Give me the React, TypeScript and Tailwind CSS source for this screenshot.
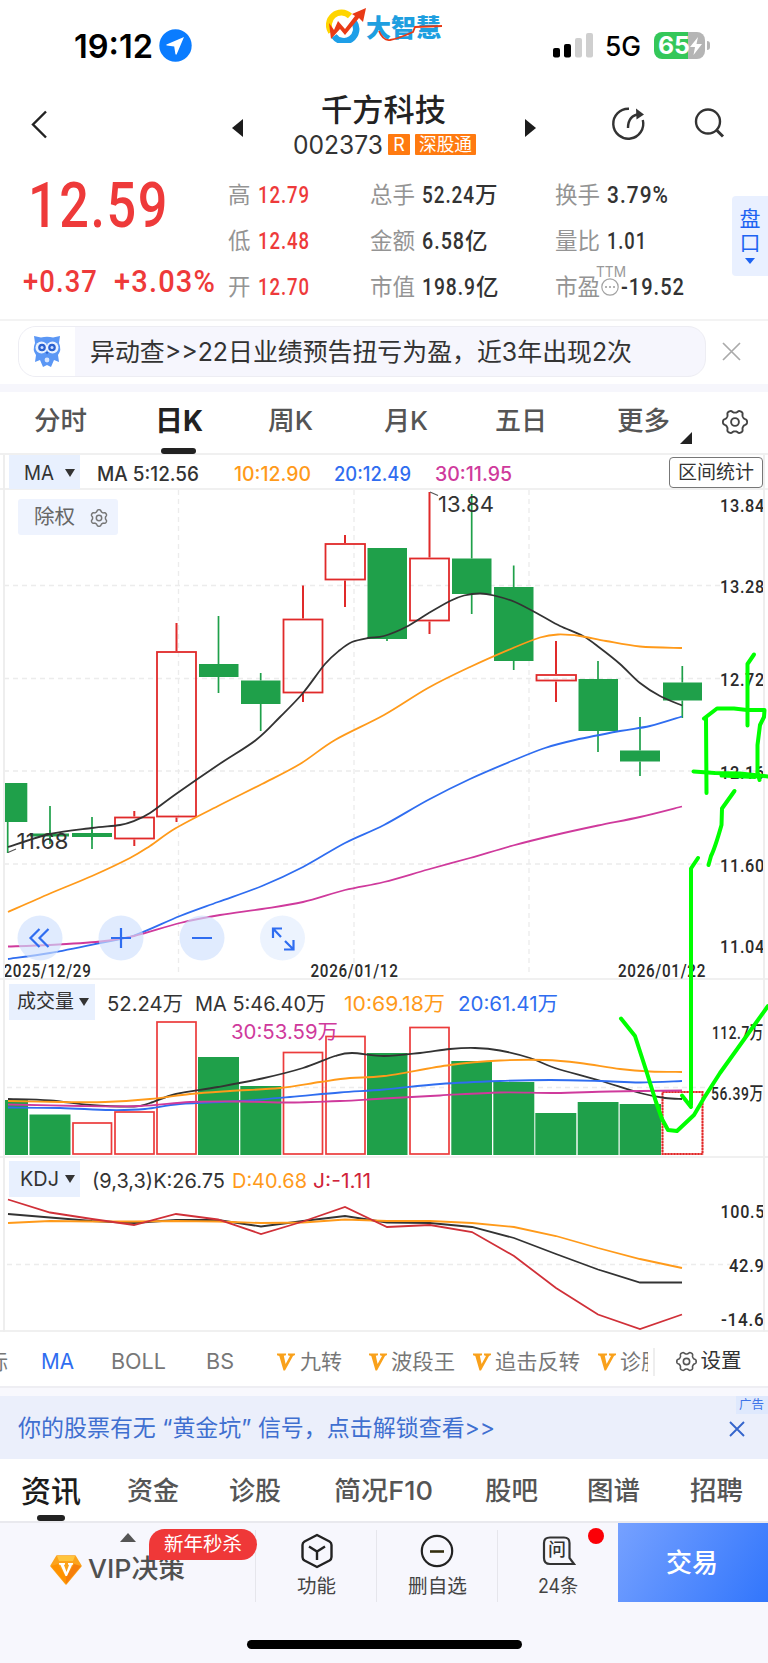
import { useLayoutEffect, useRef } from "react";
import type { ReactNode } from "react";

/** Text squeezed or stretched horizontally to an exact width. */
function Fit({ w, className = "", children }: { w: number; className?: string; children: ReactNode }) {
  const ref = useRef<HTMLSpanElement>(null);
  useLayoutEffect(() => {
    const el = ref.current;
    if (!el) return;
    el.style.transform = "none";
    const natural = el.getBoundingClientRect().width;
    el.style.transform = `scaleX(${w / natural})`;
  }, [w, children]);
  return (
    <span className={`block shrink-0 whitespace-nowrap leading-none ${className}`} style={{ width: w }}>
      <span ref={ref} className="inline-block origin-left leading-none">
        {children}
      </span>
    </span>
  );
}

const DIN = "font-['Roboto','Noto_Sans_CJK_SC',sans-serif]";
const ORANGE = "#ff9a1a";
const BLUE = "#2f6df0";
const PINK = "#cf3a9c";
const RED = "#e02a2a";
const GREEN = "#1fa04a";
const INK = "#333333";

type Pt = [number, number];

function smooth(p: Pt[]) {
  let d = `M${p[0][0]},${p[0][1]}`;
  for (let i = 0; i < p.length - 1; i++) {
    const a = p[Math.max(0, i - 1)];
    const b = p[i];
    const c = p[i + 1];
    const e = p[Math.min(p.length - 1, i + 2)];
    const k = 6;
    d += `C${b[0] + (c[0] - a[0]) / k},${b[1] + (c[1] - a[1]) / k} ${c[0] - (e[0] - b[0]) / k},${c[1] - (e[1] - b[1]) / k} ${c[0]},${c[1]}`;
  }
  return d;
}

const straight = (p: Pt[]) => "M" + p.map((q) => q.join(",")).join("L");

/** Six-toothed gear outline with a ring in the middle; `turn` rotates the teeth. */
function Gear({ size, color, turn = 0, className = "", stroke = 1.9 }: { size: number; color: string; turn?: number; className?: string; stroke?: number }) {
  const R = size / 2 - stroke / 2;
  const pts: string[] = [];
  for (let i = 0; i < 120; i++) {
    const t = (i / 120) * Math.PI * 2;
    const c = Math.tanh(1.6 * Math.cos(6 * t)) / Math.tanh(1.6);
    const r = R * (0.89 + 0.11 * c);
    const a = t + (turn * Math.PI) / 180;
    pts.push(`${(size / 2 + r * Math.cos(a)).toFixed(2)},${(size / 2 + r * Math.sin(a)).toFixed(2)}`);
  }
  return (
    <svg className={`shrink-0 ${className}`} width={size} height={size} viewBox={`0 0 ${size} ${size}`}>
      <polygon points={pts.join(" ")} fill="none" stroke={color} strokeWidth={stroke} strokeLinejoin="round" />
      <circle cx={size / 2} cy={size / 2} r={size * 0.15} fill="none" stroke={color} strokeWidth={stroke} />
    </svg>
  );
}

function StatusBar() {
  return (
    <div className="flex h-[70px]">
      <div className="flex w-[326px] items-start pl-[74px] pt-[29px]">
        <Fit w={79} className="pt-[1px] text-[33px] font-semibold text-black">19:12</Fit>
        <svg className="ml-[6px]" width="33" height="33" viewBox="0 0 33 33">
          <circle cx="16.5" cy="16.5" r="16.2" fill="#0a7cff" />
          <path d="M25 8 L7.5 15.6 Q6.8 16.3 7.8 16.6 L15.2 17.6 L16.4 25 Q17 26.2 17.7 25.2 Z" fill="#fff" />
        </svg>
      </div>
      <div className="flex items-start pt-[7px]">
        <svg width="40" height="36" viewBox="0 0 40 36">
          <path d="M5 25 A12.5 12.5 0 0 1 24 9" fill="none" stroke="#ffd500" strokeWidth="6" />
          <path d="M8 29 A11.5 11.5 0 0 0 28 15" fill="none" stroke="#1e9fe8" strokeWidth="6.5" />
          <path d="M3 16 L5 32 L14 22 L19 28 L33 11 L37 15 L40 1 L26 7 L29 9 L19 22 L12 14 L8 23 Z" fill="#e93a16" />
        </svg>
        <div className="relative mt-[9px]">
          <Fit w={75} className="text-[25px] font-black text-[#1e9fe0]">大智慧</Fit>
          <svg className="absolute left-0 top-0" width="76" height="28" viewBox="0 0 76 28">
            <path d="M13 15 Q17 25 24 24 C34 22 40 19 47 16 L49 11 L76 10" fill="none" stroke="#e93a16" strokeWidth="1.8" />
          </svg>
        </div>
      </div>
      <svg className="ml-[112px] mt-[32px]" width="41" height="26" viewBox="0 0 41 26">
        <rect x="0" y="16" width="7" height="9.500" rx="2" fill="#000" />
        <rect x="11" y="12" width="7" height="13.500" rx="2" fill="#000" />
        <rect x="22" y="6" width="7" height="19.500" rx="2" fill="#cfcfcf" />
        <rect x="33" y="1" width="7" height="24.500" rx="2" fill="#cfcfcf" />
      </svg>
      <Fit w={36} className="ml-[11px] mt-[33px] text-[27px] font-medium text-black">5G</Fit>
      <div className="ml-[13px] mt-[32px] flex items-center self-start">
        <div className="flex h-[27px] w-[51px] items-center overflow-hidden rounded-[8px] bg-[linear-gradient(90deg,#34c759_0_34px,#b5b5b5_34px)] pl-[4px]">
          <Fit w={32} className="text-[24px] font-bold text-white">65</Fit>
          <svg width="12" height="20" viewBox="0 0 12 20">
            <path d="M8 1 L0 11 L5 11 L3.500 19 L12 8 L6.500 8 Z" fill="#fff" />
          </svg>
        </div>
        <div className="ml-[2px] h-[9px] w-[3px] rounded-r-full bg-[#b5b5b5]" />
      </div>
    </div>
  );
}

function TitleBar() {
  return (
    <div className="flex h-[95px]">
      <svg className="ml-[30px] mt-[39px]" width="20" height="32" viewBox="0 0 20 32">
        <path d="M16 2.500 L3 15.500 L16 28.500" fill="none" stroke="#222" strokeWidth="2.400" />
      </svg>
      <svg className="ml-[182px] mt-[49px]" width="11" height="18" viewBox="0 0 11 18">
        <path d="M11 0 V18 L0 9 Z" fill="#1c1c1c" />
      </svg>
      <div className="ml-[50px] mt-[24px] w-[184px]">
        <Fit w={125} className="ml-[28px] text-[31px] font-medium text-[#222]">千方科技</Fit>
        <div className="mt-[7px] flex items-center">
          <Fit w={90} className="text-[25.500px] text-[#333]">002373</Fit>
          <span className="ml-[5px] flex h-[21px] w-[22px] items-center justify-center rounded-[1px] bg-[#ff7a10] text-[18px] leading-none text-white">
            R
          </span>
          <span className="ml-[5px] flex h-[21px] w-[61px] items-center justify-center rounded-[1px] bg-[#ff7a10] leading-none text-white">
            <Fit w={53} className="text-[18px]">深股通</Fit>
          </span>
        </div>
      </div>
      <svg className="ml-[48px] mt-[49px]" width="11" height="18" viewBox="0 0 11 18">
        <path d="M0 0 V18 L11 9 Z" fill="#1c1c1c" />
      </svg>
      <svg className="ml-[75px] mt-[36px]" width="36" height="36" viewBox="0 0 36 36">
        <path d="M18 2.700 A15 15 0 1 0 31.800 14" fill="none" stroke="#333" strokeWidth="2.400" />
        <path d="M17 22 C17 14 20 9 29 8" fill="none" stroke="#333" strokeWidth="2.400" />
        <path d="M25 2.500 L33 8.500 L25.500 13.500 Z" fill="#333" />
      </svg>
      <svg className="ml-[47px] mt-[37px]" width="32" height="32" viewBox="0 0 32 32">
        <circle cx="14" cy="14.500" r="12" fill="none" stroke="#333" strokeWidth="2.400" />
        <path d="M22.500 23 L29 29.500" stroke="#333" strokeWidth="3" />
      </svg>
    </div>
  );
}

function Stat({ label, value, w, unit, red }: { label: string; value: string; w: number; unit?: string; red?: boolean }) {
  return (
    <div className="flex h-[46px] items-center">
      <Fit w={label.length * 22.5} className="text-[22.500px] text-[#949494]">{label}</Fit>
      <Fit w={w} className={`ml-[7px] text-[23px] font-medium tracking-[0.05em] ${DIN} ${red ? "text-[#ee3a3a]" : "text-[#333]"}`}>{value}</Fit>
      {unit && <span className="text-[22.500px] font-medium leading-none text-[#333]">{unit}</span>}
    </div>
  );
}

function Quote() {
  return (
    <div className="flex h-[156px] border-b-2 border-[#f3f3f3]">
      <div className={`w-[228px] text-[#ee3a3a] ${DIN}`}>
        <Fit w={141} className="ml-[28px] mt-[9px] text-[63px] font-medium tracking-[0.03em]">12.59</Fit>
        <div className="mt-[29px] flex pl-[23px]">
          <Fit w={75} className="text-[31px] font-medium tracking-[0.04em]">+0.37</Fit>
          <Fit w={102} className="ml-[16px] text-[31px] font-medium tracking-[0.04em]">+3.03%</Fit>
        </div>
      </div>
      <div className="w-[142px] pt-[7px]">
        <Stat label="高" value="12.79" w={52} red />
        <Stat label="低" value="12.48" w={52} red />
        <Stat label="开" value="12.70" w={52} red />
      </div>
      <div className="w-[185px] pt-[7px]">
        <Stat label="总手" value="52.24" w={53} unit="万" />
        <Stat label="金额" value="6.58" w={43} unit="亿" />
        <Stat label="市值" value="198.9" w={54} unit="亿" />
      </div>
      <div className="w-[177px] pt-[7px]">
        <Stat label="换手" value="3.79%" w={62} />
        <Stat label="量比" value="1.01" w={40} />
        <div className="relative flex h-[46px] items-center">
          <Fit w={45} className="text-[22.500px] text-[#949494]">市盈</Fit>
          <svg className="ml-[1px]" width="18" height="18" viewBox="0 0 18 18">
            <circle cx="9" cy="9" r="8.200" fill="none" stroke="#a3a3a3" strokeWidth="1.200" />
            <circle cx="5" cy="9" r="1" fill="#999" />
            <circle cx="9" cy="9" r="1" fill="#999" />
            <circle cx="13" cy="9" r="1" fill="#999" />
          </svg>
          <Fit w={64} className={`ml-[2px] text-[23px] font-medium tracking-[0.05em] text-[#333] ${DIN}`}>-19.52</Fit>
          <Fit w={30} className="absolute left-[41px] top-[1px] text-[14px] text-[#999]">TTM</Fit>
        </div>
      </div>
      <div className="mt-[31px] flex h-[80px] w-[36px] flex-col items-center rounded-l-[4px] bg-[#e9f0ff] pt-[11px] text-[21px] leading-[24px] text-[#1d63f2]">
        <span>盘</span>
        <span>口</span>
        <svg className="mt-[3px]" width="10" height="6" viewBox="0 0 10 6">
          <path d="M0 0 H10 L5 6 Z" fill="#1d63f2" />
        </svg>
      </div>
    </div>
  );
}

function Notice() {
  return (
    <div className="flex h-[63px] items-start pl-[18px] pt-[5px]">
      <div className="flex h-[51px] w-[688px] items-center overflow-hidden rounded-[18px] border-[1.5px] border-[#ededf3] bg-[#f6f6fd]">
        <div className="flex h-full w-[56px] items-center justify-center bg-white">
          <svg width="32" height="35" viewBox="0 0 32 35">
            <path d="M3 2 L10 3.500 Q16 2 22 3.500 L29 2 L28 9 Q31 16 27 21 L28 28 L23 26 L20 33 L16 31 L12 33 L9 26 L4 28 L5 21 Q1 16 4 9 Z" fill="#5b97f5" />
            <circle cx="10.500" cy="13.500" r="6" fill="#e9f2ff" />
            <circle cx="21.500" cy="13.500" r="6" fill="#e9f2ff" />
            <circle cx="11" cy="13.500" r="3.800" fill="#2c62cf" />
            <circle cx="21" cy="13.500" r="3.800" fill="#2c62cf" />
            <circle cx="11" cy="13.500" r="1.500" fill="#cfe0ff" />
            <circle cx="21" cy="13.500" r="1.500" fill="#cfe0ff" />
            <path d="M14.500 18 H17.500 L16 20.500 Z" fill="#2c62cf" />
            <circle cx="16" cy="26" r="2.400" fill="#d7e6ff" />
          </svg>
        </div>
        <Fit w={542} className="ml-[15px] pt-[1px] text-[25px] text-[#333]">异动查&gt;&gt;22日业绩预告扭亏为盈，近3年出现2次</Fit>
      </div>
      <svg className="ml-[16px] mt-[16px]" width="19" height="19" viewBox="0 0 19 19">
        <path d="M1 1 L18 18 M18 1 L1 18" stroke="#aaa" strokeWidth="1.700" />
      </svg>
    </div>
  );
}

function PeriodTabs() {
  return (
    <div className="border-t-8 border-[#f6f6fc]">
      <div className="flex h-[63px] items-center border-b-2 border-[#f0f0f0] pb-[3px] text-[26px] text-[#555]">
        <Fit w={53} className="ml-[34px] font-medium">分时</Fit>
        <div className="relative ml-[68px] flex h-full items-center">
          <Fit w={48} className="text-[28px] font-bold text-[#222]">日K</Fit>
          <span className="absolute bottom-[-4px] left-[6px] h-[6px] w-[35px] rounded-full bg-[#222]" />
        </div>
        <Fit w={45} className="ml-[65px] font-medium">周K</Fit>
        <Fit w={44} className="ml-[71px] font-medium">月K</Fit>
        <Fit w={52} className="ml-[67px] font-medium">五日</Fit>
        <Fit w={53} className="ml-[70px] font-medium">更多</Fit>
        <svg className="ml-[10px] mt-[33px]" width="12" height="12" viewBox="0 0 12 12">
          <path d="M12 0 V12 H0 Z" fill="#222" />
        </svg>
        <Gear className="ml-[30px] mt-[2px]" size={26} color="#444" />
      </div>
    </div>
  );
}

function Down() {
  return (
    <svg width="10" height="8" viewBox="0 0 10 8">
      <path d="M0 0 H10 L5 8 Z" fill="#333" />
    </svg>
  );
}

function Dash({ d }: { d: string }) {
  return <path d={d} stroke="#ececec" strokeWidth="1.300" strokeDasharray="5 4" fill="none" />;
}

function Axis({ x, y, w, children, size = 19 }: { x: number; y: number; w: number; children: string; size?: number }) {
  return (
    <text x={x} y={y} fontSize={size} letterSpacing="0.8" textLength={w} lengthAdjust="spacingAndGlyphs" fill="#2b2b2b" className={`font-medium ${DIN}`}>
      {children}
    </text>
  );
}

// up, left, right, bodyTop, bodyBottom, high, low, center
type Candle = [number, number, number, number, number, number, number, number];
const candles: Candle[] = [
  [0, 4, 27.3, 783, 822, 783, 853, 7.7],
  [0, 30, 69, 833.5, 836.5, 806, 844, 50],
  [0, 72, 112, 833, 837, 817, 849, 92],
  [1, 114, 155, 816.5, 839.5, 811, 846, 134.3],
  [1, 156, 197, 651, 817.5, 623, 822, 176.5],
  [0, 199, 238.5, 664, 677, 616, 693, 218.5],
  [0, 241, 280.5, 680.5, 704, 673, 731, 260.7],
  [1, 282.5, 323.5, 618.5, 693.5, 585.5, 702, 303],
  [1, 324.5, 366, 543, 580.5, 535, 607, 345],
  [0, 367.5, 407, 548, 639, 548, 641, 387],
  [1, 409, 450, 557.5, 621.5, 492, 634, 429.5],
  [0, 452, 491.5, 558.5, 594, 494, 614, 471.7],
  [0, 494, 533.5, 587, 661, 565.5, 670, 513.7],
  [1, 535.5, 577, 674, 681.5, 641, 702, 556],
  [0, 578.5, 618, 679, 731, 661, 752, 598],
  [0, 620, 660, 750.5, 761.5, 717, 776, 640],
  [0, 663, 702, 682.5, 700.5, 666, 718, 682.3],
];

const ma5: Pt[] = [[8, 847], [50, 834], [92, 828], [120, 825], [134, 821], [150, 813], [176, 794], [218, 765], [256, 740], [280, 717], [303, 693], [325, 664], [340, 650], [352, 642], [368, 638], [384, 636], [406, 627], [428, 613.5], [450, 601], [464, 595.5], [480, 593.5], [494, 595.5], [515, 602], [540, 615], [560, 626], [583, 636], [600, 648], [620, 664], [640, 683], [660, 696], [682, 705.5]];
const ma10: Pt[] = [[8, 912], [50, 893.5], [92, 876], [130, 858], [150, 846], [176, 828], [220, 805], [262, 784], [300, 764], [335, 740], [384, 715], [428, 688], [470, 667], [513, 648], [540, 637.5], [558, 634.5], [580, 636], [606, 641], [640, 646.5], [682, 648]];
const ma20: Pt[] = [[8, 959], [50, 953], [100, 943], [134, 935.5], [180, 916], [218, 902], [262, 886], [303, 867], [345, 843], [384, 825], [428, 800], [470, 779], [513, 760.5], [545, 748], [575, 740], [620, 731], [650, 726], [682, 716.5]];
const ma30: Pt[] = [[8, 946.5], [50, 945], [100, 941.5], [134, 936], [180, 923], [220, 915], [262, 909], [303, 902], [345, 890], [384, 882], [428, 869.5], [470, 858], [513, 845.5], [555, 835], [598, 825.5], [640, 817], [682, 806.5]];

function PricePanel() {
  const prices: [string, number][] = [["13.84", 512], ["13.28", 593], ["12.72", 686], ["12.16", 779], ["11.60", 872], ["11.04", 953]];
  return (
    <div className="relative h-[488px]">
      <svg className="block overflow-visible" width="768" height="488" viewBox="0 490 768 488">
        <Dash d="M4 585.500H720M4 678.500H720M4 771H760M4 864H720M178.500 490V976M354 490V976M529 490V976" />
        {candles.map(([up, l, r, t, b, hi, lo, c], i) => (
          <g key={i}>
            <path d={`M${c} ${hi}V${t}M${c} ${b}V${lo}`} stroke={up ? RED : GREEN} strokeWidth={up ? 2 : 1.7} />
            {up ? (
              <rect x={l + 1} y={t + 1} width={r - l - 2} height={b - t - 2} fill="none" stroke={RED} strokeWidth="1.800" />
            ) : (
              <rect x={l} y={t} width={r - l} height={b - t} fill={GREEN} />
            )}
          </g>
        ))}
        <path d="M50 830V840M92 830V840" stroke={GREEN} strokeWidth="1.700" />
        <g fill="none" strokeWidth="1.800">
          <path d={smooth(ma5)} stroke={INK} />
          <path d={smooth(ma10)} stroke={ORANGE} />
          <path d={smooth(ma20)} stroke={BLUE} />
          <path d={smooth(ma30)} stroke={PINK} />
        </g>
        <g fill="#333" fontSize="21.500">
          <text x="16.500" y="849" textLength="52" lengthAdjust="spacingAndGlyphs">11.68</text>
          <text x="438" y="512" textLength="56" lengthAdjust="spacingAndGlyphs">13.84</text>
        </g>
        <path d="M8 852.500L16 849M430 492L438 495.500" stroke="#555" strokeWidth="1.200" />
        {prices.map(([t, y]) => (
          <Axis key={t} x={720} y={y} w={45}>{t}</Axis>
        ))}
        <Axis x={3.5} y={977} w={88} size={17.5}>2025/12/29</Axis>
        <Axis x={310.5} y={977} w={88} size={17.5}>2026/01/12</Axis>
        <Axis x={618} y={977} w={88} size={17.5}>2026/01/22</Axis>
        <g fill="#cfe0fd" fillOpacity="0.65">
          <circle cx="40" cy="938" r="22.500" />
          <circle cx="121" cy="938" r="22.500" />
          <circle cx="202" cy="938" r="22.500" />
          <circle cx="282.500" cy="938" r="22.500" fillOpacity="0.4" />
        </g>
        <g fill="none" stroke={BLUE} strokeWidth="2.200">
          <path d="M39.500 929L30.500 938L39.500 947M48.500 929L39.500 938L48.500 947" />
          <path d="M111 938H131M121 928V948M192 938H212" />
          <path d="M273 938V928.500H282M273 928.500L281 937M293.500 940V949.500H284M293.500 949.500L285 941" />
        </g>
      </svg>
      <div className="absolute left-[18px] top-[9px] flex h-[36px] w-[100px] items-center rounded-[3px] bg-[#eef3fe] pl-[16px] pt-[1px]">
        <Fit w={41} className="text-[20.500px] text-[#666]">除权</Fit>
        <Gear className="ml-[15px]" size={18} color="#777" turn={30} stroke={1.5} />
      </div>
    </div>
  );
}

const vols: [number, number, number, number][] = [
  [0, 4, 28, 1100], [0, 29.5, 70.5, 1114.5], [1, 72, 112.5, 1122], [1, 114, 155, 1111], [1, 156, 197, 1021],
  [0, 198, 239, 1057], [0, 240.3, 281.3, 1086], [1, 282.5, 323.5, 1051.5], [1, 325, 366, 1035.5], [0, 367, 407.5, 1053],
  [1, 409, 450, 1026.5], [0, 451.3, 492, 1061], [0, 493.3, 534.3, 1082], [0, 535.3, 576.3, 1113], [0, 577.7, 618.5, 1102], [0, 619.7, 661, 1104],
];
const v5: Pt[] = [[8, 1099], [50, 1100.5], [90, 1105], [134, 1106.5], [150, 1103], [176, 1094], [218, 1087], [262, 1078.5], [303, 1068], [335, 1056], [352, 1053], [384, 1056], [420, 1053], [450, 1049], [475, 1048], [500, 1050.5], [530, 1058], [555, 1068], [598, 1080], [640, 1093], [665, 1098], [682, 1099]];
const v10: Pt[] = [[8, 1101], [60, 1102], [105, 1102], [150, 1099], [190, 1094], [230, 1091], [280, 1088], [320, 1082], [350, 1078], [384, 1076], [450, 1065], [500, 1060.5], [545, 1060], [580, 1063], [620, 1069], [650, 1071.5], [682, 1072]];
const v20: Pt[] = [[8, 1107.5], [60, 1108], [110, 1110], [145, 1109], [180, 1104], [240, 1101], [290, 1097], [340, 1092.5], [384, 1089.5], [440, 1084], [500, 1081], [550, 1080], [600, 1081], [640, 1082.5], [682, 1081]];
const v30: Pt[] = [[8, 1104.5], [80, 1106], [140, 1106], [190, 1102], [240, 1101.5], [290, 1102.5], [340, 1101], [384, 1098.5], [440, 1095.5], [500, 1092.5], [555, 1093], [610, 1091.5], [682, 1090.5]];

function VolumePanel() {
  return (
    <div className="border-y-2 border-[#f0f0f0]">
      <div className="relative h-[176px]">
        <svg className="block" width="768" height="176" viewBox="0 980 768 176">
          <Dash d="M7 1087.500H710" />
          {vols.map(([up, l, r, t], i) =>
            up ? (
              <rect key={i} x={l + 1} y={t + 1} width={r - l - 2} height={1154 - t - 1} fill="none" stroke="#ec3b3b" strokeWidth="1.700" />
            ) : (
              <rect key={i} x={l} y={t} width={r - l} height={1155 - t} fill={GREEN} />
            )
          )}
          <rect x="662.500" y="1092" width="40" height="62" fill="none" stroke="#f27a7a" strokeWidth="1.800" />
          <rect x="662.500" y="1092" width="40" height="62" fill="none" stroke={RED} strokeWidth="1.800" strokeDasharray="2 1" />
          <g fill="none" strokeWidth="1.800">
            <path d={smooth(v5)} stroke={INK} />
            <path d={smooth(v10)} stroke={ORANGE} />
            <path d={smooth(v20)} stroke={BLUE} />
            <path d={smooth(v30)} stroke={PINK} />
          </g>
          <Axis x={712} y={1039} w={52} size={18}>112.7万</Axis>
          <Axis x={711} y={1100} w={53} size={18}>56.39万</Axis>
        </svg>
        <div className="absolute inset-x-0 top-[4px]">
          <div className="flex h-[36px] items-center text-[20px] text-[#333]">
            <div className="ml-[9px] flex h-[36px] w-[86px] items-center bg-[#e8f0fe] pl-[8px]">
              <Fit w={57} className="text-[19.500px]">成交量</Fit>
              <span className="ml-[5px]"><Down /></span>
            </div>
            <Fit w={76} className="ml-[12px] pt-[3px]">52.24万</Fit>
            <Fit w={131} className="ml-[12px] pt-[3px]">MA 5:46.40万</Fit>
            <Fit w={101} className="ml-[18px] pt-[3px] text-[#ff9a1a]">10:69.18万</Fit>
            <Fit w={100} className="ml-[13px] pt-[3px] text-[#2f6df0]">20:61.41万</Fit>
          </div>
          <Fit w={107} className="ml-[231px] mt-[2px] text-[20px] text-[#cf3a9c]">30:53.59万</Fit>
        </div>
      </div>
    </div>
  );
}

const kLine: Pt[] = [[8, 1214], [50, 1217.5], [92, 1221], [134, 1223], [176, 1220], [218, 1220], [261, 1226.5], [303, 1221], [345, 1216], [387, 1222.5], [430, 1223], [472, 1227], [514, 1238], [556, 1254], [598, 1269.5], [640, 1282.5], [682, 1282.5]];
const dLine: Pt[] = [[8, 1223], [50, 1221], [92, 1221.5], [134, 1221.5], [176, 1221], [218, 1221.5], [261, 1223], [303, 1222.5], [345, 1219.5], [387, 1221], [430, 1221], [472, 1223], [514, 1227], [556, 1236], [598, 1248], [640, 1259], [682, 1268]];
const jLine: Pt[] = [[8, 1199.5], [50, 1212.5], [92, 1219], [134, 1225], [176, 1214], [218, 1219.5], [261, 1234], [303, 1221.5], [345, 1207], [387, 1227], [430, 1225], [472, 1232], [514, 1256], [556, 1288], [598, 1314.5], [640, 1329], [682, 1314.5]];

function KdjPanel() {
  return (
    <div className="h-[174px] border-b-2 border-[#f0f0f0] pt-[3px]">
      <div className="flex h-[36px] items-center text-[20px] text-[#333]">
        <div className="ml-[9px] flex h-[36px] w-[71px] items-center bg-[#e8f0fe] pl-[11px]">
          <Fit w={39} className="text-[20.500px]">KDJ</Fit>
          <span className="ml-[6px]"><Down /></span>
        </div>
        <Fit w={133} className="ml-[12px] pt-[3px]">(9,3,3)K:26.75</Fit>
        <Fit w={75} className="ml-[7px] pt-[3px] text-[#ff9a1a]">D:40.68</Fit>
        <Fit w={58} className="ml-[6px] pt-[3px] text-[#d0243a]">J:-1.11</Fit>
      </div>
      <svg className="block" width="768" height="133" viewBox="0 1197 768 133">
        <Dash d="M7 1264.500H730" />
        <g fill="none" strokeWidth="1.800">
          <path d={straight(kLine)} stroke={INK} />
          <path d={straight(dLine)} stroke={ORANGE} />
          <path d={straight(jLine)} stroke="#d03038" />
        </g>
        <Axis x={720.5} y={1217.5} w={44.5}>100.5</Axis>
        <Axis x={729} y={1272} w={35.5}>42.9</Axis>
        <Axis x={721} y={1326} w={43.500}>-14.6</Axis>
      </svg>
    </div>
  );
}

function Charts() {
  return (
    <div className="relative">
      <div className="flex h-[35px] items-center border-b-2 border-[#f0f0f0] text-[19.500px] font-medium text-[#333]">
        <div className="ml-[9px] flex h-[34px] w-[71px] items-center bg-[#e8f0fe] pl-[15px] pt-[3px] font-normal">
          <Fit w={30} className="text-[20px]">MA</Fit>
          <span className="ml-[11px]"><Down /></span>
        </div>
        <Fit w={102} className="ml-[17px] pt-[6px]">MA 5:12.56</Fit>
        <Fit w={77} className="ml-[35px] pt-[6px] text-[#ff9a1a]">10:12.90</Fit>
        <Fit w={77} className="ml-[23px] pt-[6px] text-[#2f6df0]">20:12.49</Fit>
        <Fit w={77} className="ml-[24px] pt-[6px] text-[#cf3a9c]">30:11.95</Fit>
        <div className="ml-[157px] mt-[2px] flex h-[31px] w-[94px] items-center rounded-[4px] border-[1.500px] border-[#777] pl-[8px] font-normal">
          <Fit w={76} className="text-[19px]">区间统计</Fit>
        </div>
      </div>
      <PricePanel />
      <VolumePanel />
      <KdjPanel />
      <div className="absolute bottom-0 left-[3px] top-0 w-[1.500px] bg-[#eeeeee]" />
      <div className="absolute bottom-0 left-[763px] top-0 w-[1.500px] bg-[#eeeeee]" />
      <svg className="absolute left-0 top-0" width="768" height="877" viewBox="0 455 768 877">
        <g fill="none" stroke="#00ff00" strokeWidth="4" strokeLinecap="round" strokeLinejoin="round">
          <path d="M754 654.500L747.500 664V725.500" />
          <path d="M704 718.500L717 708.500L734 708.500L747 710L764.500 710L764 717L760 725L757.500 745V772L759.500 780" />
          <path d="M706 718L706.500 793" />
          <path d="M693.500 771.500L715 773L740 773.500L768 776.500" />
          <path d="M722 775L755 776.500" strokeWidth="5" />
          <path d="M734.500 791L722 808.500L721.500 825Q715 848 711 856L708.500 865" />
          <path d="M698 858L691 868.500V1105" />
          <path d="M682 1095.500L691 1107" />
          <path d="M621 1018.500L635 1036L646 1070L656 1102L662 1119L668 1130L677 1131L694 1115L704 1098L720 1073L768 1006" />
        </g>
      </svg>
    </div>
  );
}

function VMark() {
  return (
    <svg className="shrink-0" width="18" height="18" viewBox="0 0 18 18">
      <path d="M0 0.500 H9 V2.200 L6.800 2.700 L8.600 11 L13 3 L11 2.200 V0.500 H18 V2 L16 3 L8 17.500 H6.500 L2.300 3 L0 2.200 Z" fill="#f9a11b" />
    </svg>
  );
}

function IndicatorRow() {
  return (
    <div className="flex h-[56px] items-center overflow-hidden border-b-2 border-[#eeeef3] pt-[5px] text-[21px] text-[#777]">
      <div className="flex h-full w-[648px] items-center overflow-hidden">
        <Fit w={21} className="-ml-[13px]">标</Fit>
        <Fit w={33} className="ml-[33px] text-[#2f6df0]">MA</Fit>
        <Fit w={55} className="ml-[37px]">BOLL</Fit>
        <Fit w={28} className="ml-[40px]">BS</Fit>
        <span className="ml-[43px]"><VMark /></span>
        <Fit w={42} className="ml-[5px]">九转</Fit>
        <span className="ml-[27px]"><VMark /></span>
        <Fit w={64} className="ml-[4px]">波段王</Fit>
        <span className="ml-[18px]"><VMark /></span>
        <Fit w={85} className="ml-[4px]">追击反转</Fit>
        <span className="ml-[18px]"><VMark /></span>
        <Fit w={42} className="ml-[4px]">诊股</Fit>
      </div>
      <span className="ml-[5px] h-[28px] w-[1.500px] bg-[#eeeeee]" />
      <Gear className="ml-[21px]" size={21} color="#555" stroke={1.6} />
      <Fit w={41} className="ml-[4px] text-[20.500px] text-[#333]">设置</Fit>
    </div>
  );
}

function Banner() {
  return (
    <div className="bg-[#f8f8fd] pt-[8px]">
      <div className="relative flex h-[63px] items-center bg-[#ebeffb] pl-[18px] pt-[2px]">
        <Fit w={477} className="text-[23px] text-[#3f6fd0]">你的股票有无 “黄金坑” 信号，点击解锁查看&gt;&gt;</Fit>
        <svg className="ml-[234px]" width="16" height="16" viewBox="0 0 16 16">
          <path d="M1 1 L15 15 M15 1 L1 15" stroke="#3565cc" strokeWidth="1.900" />
        </svg>
        <div className="absolute right-0 top-0 flex h-[18px] w-[32px] items-center bg-[#dfe9fd] pl-[3px]">
          <Fit w={25} className="text-[12.500px] text-[#3d74e8]">广告</Fit>
        </div>
      </div>
    </div>
  );
}

function InfoTabs() {
  return (
    <div className="flex h-[64px] items-center border-b-2 border-[#e9e9ee] text-[26px] font-medium text-[#555]">
      <div className="relative ml-[21px] flex h-full items-center">
        <Fit w={60} className="pt-[2px] text-[30px] font-medium text-[#1c1c1c]">资讯</Fit>
        <span className="absolute bottom-0 left-[16px] h-[6px] w-[28px] rounded-full bg-[#222]" />
      </div>
      <Fit w={52} className="ml-[46px] pt-[2px]">资金</Fit>
      <Fit w={52} className="ml-[50px] pt-[2px]">诊股</Fit>
      <Fit w={99} className="ml-[53px] pt-[2px]">简况F10</Fit>
      <Fit w={53} className="ml-[52px] pt-[2px]">股吧</Fit>
      <Fit w={53} className="ml-[49px] pt-[2px]">图谱</Fit>
      <Fit w={53} className="ml-[50px] pt-[2px]">招聘</Fit>
    </div>
  );
}

function BottomBar() {
  return (
    <div className="h-[141px] bg-[#f7f7fd]">
      <div className="flex h-[79px]">
        <div className="relative flex w-[255px] items-start pl-[50px] pt-[32px]">
          <svg width="32" height="30" viewBox="0 0 32 30">
            <path d="M7 1 H25 L31 11 L16 29 L1 11 Z" fill="#fba31c" stroke="#fba31c" strokeWidth="1.500" strokeLinejoin="round" />
            <path d="M7 1 H25 L23 6 H9 Z" fill="#ffc53d" />
            <path d="M1 11 L16 29 V22 L8 9 Z" fill="#ff9200" />
            <path d="M31 11 L16 29 V22 L24 9 Z" fill="#f67e0a" />
            <path d="M9 8 H15 V9.500 L14 10 L16.500 17 L19 10 L18 9.500 V8 H23 V9.500 L22 10 L17 21 H15.500 L10.500 10 L9 9.500 Z" fill="#fff" />
          </svg>
          <Fit w={97} className="ml-[6px] mt-[1px] text-[26px] font-medium text-[#505050]">VIP决策</Fit>
          <svg className="absolute left-[120px] top-[10px]" width="16" height="9" viewBox="0 0 16 9">
            <path d="M8 0 L16 9 H0 Z" fill="#555" />
          </svg>
          <div className="absolute left-[149px] top-[6px] z-10 flex h-[31px] w-[108px] items-center rounded-[16px] rounded-bl-none bg-[#ef3838] pl-[15px]">
            <Fit w={78} className="text-[19.500px] text-white">新年秒杀</Fit>
          </div>
        </div>
        <div className="mt-[7px] flex w-[121px] flex-col items-center border-l-[1.500px] border-[#e6e6ec] pl-[1px] pt-[3px]">
          <svg width="34" height="36" viewBox="0 0 34 36">
            <path d="M17 2 L29.500 8.500 Q31.500 9.700 31.500 12 V24 Q31.500 26.300 29.500 27.500 L17 34 L4.500 27.500 Q2.500 26.300 2.500 24 V12 Q2.500 9.700 4.500 8.500 Z" fill="none" stroke="#222" strokeWidth="2.400" strokeLinejoin="round" />
            <path d="M9 13.500 L17 18.500 L25 13.500 M17 18.500 V27" fill="none" stroke="#222" strokeWidth="2.400" />
          </svg>
          <Fit w={39} className="mt-[8px] text-[19.500px] text-[#444]">功能</Fit>
        </div>
        <div className="mt-[7px] flex w-[121px] flex-col items-center border-l-[1.500px] border-[#e6e6ec] pt-[4px]">
          <svg width="34" height="34" viewBox="0 0 34 34">
            <circle cx="17" cy="17" r="15.200" fill="none" stroke="#222" strokeWidth="2.200" />
            <path d="M10 17.500 H24" stroke="#332e10" strokeWidth="2.600" />
          </svg>
          <Fit w={59} className="mt-[9px] text-[19.500px] text-[#444]">删自选</Fit>
        </div>
        <div className="relative mt-[7px] flex w-[121px] flex-col items-center border-l-[1.500px] border-[#e6e6ec] pt-[6px]">
          <div className="relative ml-[2px] h-[30px] w-[34px]">
            <svg width="34" height="30" viewBox="0 0 34 30">
              <path d="M8 1.500 H22 Q27.500 1.500 27.500 7 V22 L32 28 H8 Q2 28 2 22 V7 Q2 1.500 8 1.500 Z" fill="none" stroke="#333" strokeWidth="2.200" />
            </svg>
            <span className="absolute left-[6px] top-[5px] text-[18px] font-medium leading-none text-[#333]">问</span>
          </div>
          <Fit w={40} className="mt-[11px] text-[19.500px] text-[#444]">24条</Fit>
          <span className="absolute left-[90px] top-[-2px] h-[16px] w-[16px] rounded-full bg-[#fb0007]" />
        </div>
        <div className="flex flex-1 items-center bg-[linear-gradient(120deg,#76a1ff,#3276fc)] pl-[48px]">
          <Fit w={52} className="text-[26px] font-medium text-white">交易</Fit>
        </div>
      </div>
      <div className="ml-[247px] mt-[38px] h-[9px] w-[275px] rounded-full bg-black" />
    </div>
  );
}

export default function App() {
  return (
    <div className="h-[1663px] w-[768px] overflow-hidden bg-white font-['Inter','Noto_Sans_CJK_SC',sans-serif]">
      <StatusBar />
      <TitleBar />
      <Quote />
      <Notice />
      <PeriodTabs />
      <Charts />
      <IndicatorRow />
      <Banner />
      <InfoTabs />
      <BottomBar />
    </div>
  );
}
